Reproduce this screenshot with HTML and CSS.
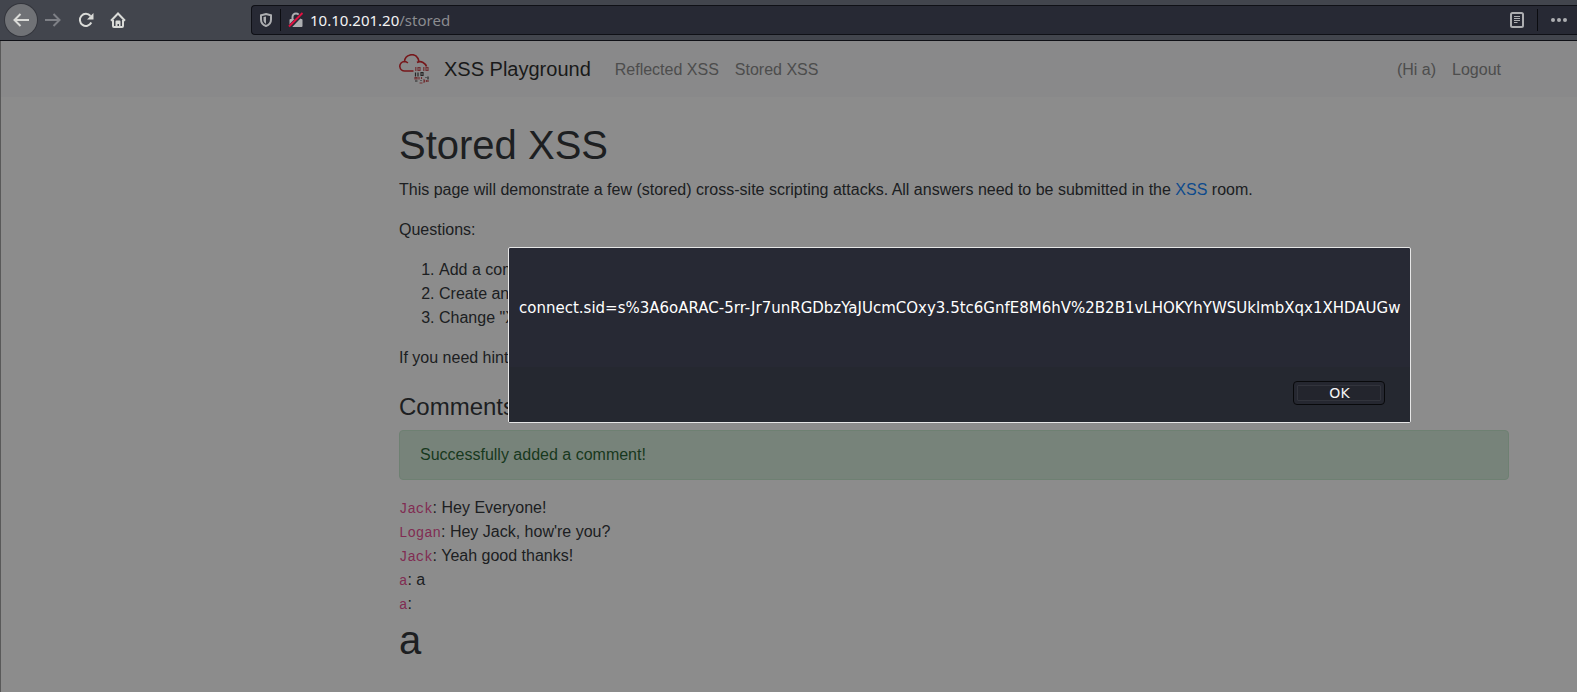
FILE: index.html
```html
<!DOCTYPE html>
<html lang="en">
<head>
<meta charset="utf-8">
<title>XSS Playground</title>
<link rel="stylesheet" href="styles.css">
</head>
<body>
<header class="toolbar">
  <div class="nav-buttons">
    <button class="tool back" aria-label="Back"><svg width="16" height="16" viewBox="0 0 16 16"><path d="M16 8H2M7.500 2L1.500 8L7.500 14"/></svg></button>
    <button class="tool forward" aria-label="Forward"><svg width="16" height="16" viewBox="0 0 16 16"><path d="M0 8h14M8.500 2L14.500 8L8.500 14"/></svg></button>
    <button class="tool" aria-label="Reload"><svg width="16" height="16" viewBox="0 0 16 16"><path d="M13.300 10.500A6 6 0 1 1 12.500 4"/><path class="solid" d="M15.500 1v6.500H9z"/></svg></button>
    <button class="tool" aria-label="Home"><svg width="16" height="16" viewBox="0 0 16 16"><path d="M1 8.700L8 1.500L15 8.700M3 8V14q0 1 1 1H12q1 0 1-1V8"/><path class="solid" d="M5.500 15V9.500q0-1 1-1h3q1 0 1 1V15H9V12H7.500v3z"/></svg></button>
  </div>
  <div class="urlbar">
    <button class="url-icon shield" aria-label="Tracking protection"><svg width="14" height="16" viewBox="0 0 14 16"><path d="M7 2L12 3.300V7.500C12 10.800 10 13 7 14C4 13 2 10.800 2 7.500V3.300z"/><path class="solid" d="M7 4.500L4.500 5v3c0 2 1 3 2.500 3.800z"/></svg></button>
    <button class="url-icon lock" aria-label="Connection is not secure"><svg width="16" height="16" viewBox="0 0 16 16"><path d="M4.500 7V5a3.500 3.500 0 0 1 7 0v2"/><path class="solid" d="M2.500 7h11q1 0 1 1v6q0 1-1 1h-11q-1 0-1-1V8q0-1 1-1z"/><path class="gap" d="M1 15.500L15 1"/><path class="slash" d="M1 14.500L14.500 1"/></svg></button>
    <div class="address"><span class="host">10.10.201.20</span>/stored</div>
    <button class="url-icon reader" aria-label="Reader view"><svg width="16" height="16" viewBox="0 0 16 16"><rect x="2" y="1" width="12" height="14" rx="1.500"/><path class="thin" d="M5 4.500h6M5 6.500h6M5 8.500h6M5 10.500h3.500"/></svg></button>
    <button class="url-icon more" aria-label="Page actions"><svg width="16" height="16" viewBox="0 0 16 16"><circle class="solid" cx="2" cy="8" r="2"/><circle class="solid" cx="8" cy="8" r="2"/><circle class="solid" cx="14" cy="8" r="2"/></svg></button>
  </div>
</header>
<div class="viewport">
  <nav class="navbar">
    <a class="brand" href="#">
      <svg width="30" height="30" viewBox="0 0 30 30">
        <path class="cloud" d="M14.500 17H6A5 5 0 0 1 .8 12.500A4.800 4.800 0 0 1 5.500 7.500A7.200 7.200 0 0 1 19 4.500Q19.800 6 19.600 7.800M5.500 7.500Q7.600 7.500 8.800 9M18 8.500Q21 6.800 24 8.500Q27 10.200 27.500 12.500"/>
        <g class="bits-red"><path d="M16.800 13v4M19 13.500h2v3h-2zM24.800 13v4M27 13.500h2v3h-2z"/><path d="M16 23.500h2v1.500h-2zM20 23v2.500M22.500 23v2M24 26h1.500v2h-1.500M27.500 26v2M29 26v2M20.500 29h3"/></g>
        <g class="bits-dark"><path d="M16.500 18.500v4M19 18.500v4M22 18.500h2v3h-2zM26.500 23.500h1M29 22.500v3M16 27h2.500M21.500 26.500h1"/></g>
      </svg>
      <span>XSS Playground</span>
    </a>
    <a class="nav-link" href="#">Reflected XSS</a>
    <a class="nav-link" href="#">Stored XSS</a>
    <span class="nav-link user">(Hi a)</span>
    <a class="nav-link" href="#">Logout</a>
  </nav>
  <main class="content">
    <h1>Stored XSS</h1>
    <p>This page will demonstrate a few (stored) cross-site scripting attacks. All answers need to be submitted in the <a href="#">XSS</a> room.</p>
    <p>Questions:</p>
    <ol>
      <li>Add a com</li>
      <li>Create an</li>
      <li>Change "X</li>
    </ol>
    <p>If you need hints</p>
    <h4>Comments</h4>
    <div class="alert" role="status">Successfully added a comment!</div>
    <div class="comments">
      <div><code>Jack</code>: Hey Everyone!</div>
      <div><code>Logan</code>: Hey Jack, how're you?</div>
      <div><code>Jack</code>: Yeah good thanks!</div>
      <div><code>a</code>: a</div>
      <div><code>a</code>:</div>
      <h1>a</h1>
    </div>
  </main>
  <div class="overlay">
    <div class="dialog" role="alertdialog" aria-labelledby="message">
      <p class="message" id="message">connect.sid=s%3A6oARAC-5rr-Jr7unRGDbzYaJUcmCOxy3.5tc6GnfE8M6hV%2B2B1vLHOKYhYWSUklmbXqx1XHDAUGw</p>
      <div class="actions"><button class="ok"><span>OK</span></button></div>
    </div>
  </div>
</div>
</body>
</html>
```
FILE: styles.css
```css
* { box-sizing: border-box; }
html, body { height: 100%; }
body {
  margin: 0;
  display: flex;
  flex-direction: column;
  overflow: hidden;
  background: #fff;
  color: #212529;
  font: 16px/1.5 "Liberation Sans", Arial, sans-serif;
}
button { border: 0; padding: 0; background: none; }
svg { display: block; fill: none; }

.toolbar {
  display: flex;
  align-items: center;
  flex: none;
  height: 41px;
  padding-left: 5px;
  background: #42454d;
  border-bottom: 1px solid #0f1016;
}
.nav-buttons { display: flex; align-items: center; width: 246px; }
.tool {
  display: grid;
  place-items: center;
  width: 32px;
  height: 32px;
}
.tool svg { stroke: #dadbd8; stroke-width: 2; }
.tool .solid { fill: #dadbd8; stroke: none; }
.tool.back {
  background: #707276;
  border-radius: 50%;
  box-shadow: 0 0 0 1px #34363d;
}
.tool.forward { margin-right: 1px; }
.tool.forward svg { stroke: #7e8086; }

.urlbar {
  display: flex;
  align-items: center;
  flex: 1;
  height: 30px;
  padding-left: 4px;
  background: #272934;
  border: 1px solid #0f1016;
  border-right: 0;
  border-radius: 4px 0 0 4px;
}
.url-icon { display: grid; place-items: center; height: 22px; }
.url-icon svg { stroke: #adaeb1; stroke-width: 2; }
.url-icon .solid { fill: #adaeb1; stroke: none; }
.url-icon .thin { stroke-width: 1; }
.url-icon .gap { stroke: #272934; stroke-width: 4; }
.url-icon .slash { stroke: #e01140; stroke-width: 2; }
.shield { width: 25px; padding-right: 5px; border-right: 1px solid #0b0c10; }
.lock { width: 29px; }
.address {
  flex: 1;
  color: #8b8c90;
  font: 15px/22px "Noto Sans", sans-serif;
}
.host { color: #f4f4f4; }
.reader { width: 31px; padding-right: 10px; }
.more { width: 40px; padding-left: 2px; border-left: 1px solid #0b0c10; }

.viewport {
  position: relative;
  flex: 1;
  border-left: 1px solid #999;
}
.navbar {
  display: flex;
  align-items: center;
  height: 56px;
  padding: 0 68px 0 398px;
  background: #f8f9fa;
}
.brand {
  display: flex;
  align-items: center;
  gap: 15px;
  margin-right: 16px;
  color: #191919;
  font-size: 20px;
  line-height: 30px;
  text-decoration: none;
}
.cloud { stroke: #d3141b; stroke-width: 1.6; }
.bits-red { stroke: #c8474c; stroke-width: 1.2; }
.bits-dark { stroke: #333; stroke-width: 1.2; }
.nav-link { padding: 10px 8px 8px; color: #808080; text-decoration: none; }
.user { margin-left: auto; }

.content { padding: 24px 68px 0 398px; }
h1, h4 { margin: 0 0 9px; font-weight: 400; }
h1 { font-size: 40px; line-height: 48px; }
h4 { margin-top: 22px; font-size: 24px; line-height: 29px; }
p { margin: 0 0 16px; }
ol { margin: 0 0 16px; padding-left: 40px; }
.content a { color: #007bff; text-decoration: none; }
.alert {
  margin-bottom: 16px;
  padding: 12px 20px;
  color: #155724;
  background: #d4edda;
  border: 1px solid #c3e6cb;
  border-radius: 4px;
}
code { color: #e83e8c; font-family: "Liberation Mono", monospace; font-size: 14px; }

.overlay {
  position: absolute;
  inset: 0 0 0 -1px;
  background: rgba(26, 26, 26, 0.5);
}
.dialog {
  position: absolute;
  top: 206px;
  left: 508px;
  display: flex;
  flex-direction: column;
  background: #272934;
  border: 1px solid #e6e6e6;
  border-radius: 2px;
}
.message {
  margin: 0;
  padding: 48px 10px 47px;
  color: #fff;
  font: 15px/24px "DejaVu Sans", sans-serif;
  white-space: nowrap;
}
.actions {
  display: flex;
  justify-content: flex-end;
  padding: 14px 25px 17px;
  background: #252830;
}
.ok {
  width: 92px;
  height: 24px;
  padding: 3px;
  color: #f4f4f4;
  background: #252730;
  border: 1px solid #08090b;
  border-radius: 4px;
  font: 14px/14px "DejaVu Sans", sans-serif;
}
.ok span { display: block; border: 1px solid #32343c; border-radius: 1px; background: #23252d; }
```
